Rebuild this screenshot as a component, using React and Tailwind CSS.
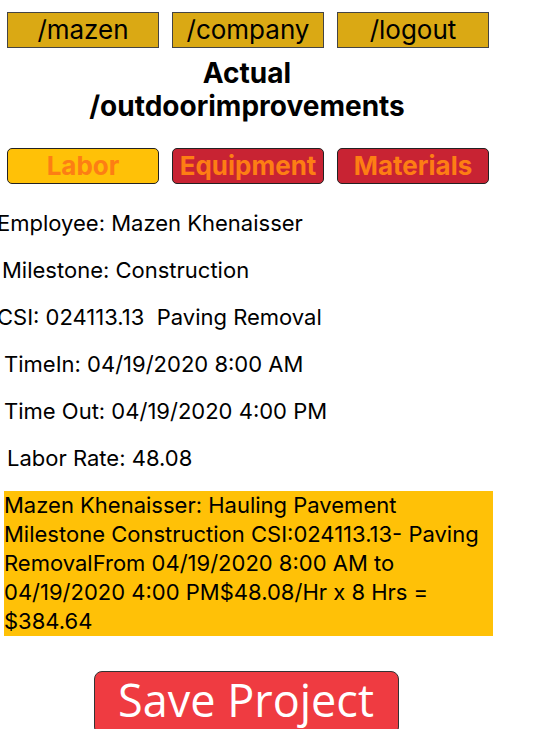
import React from 'react';

const body = { fontFamily: 'Inter, "Liberation Sans", sans-serif' };

export default function App() {
    const navLinks = ["/mazen", "/company", "/logout"];
    const tabs = [
        { name: "Labor", bg: "bg-[#ffc107]" },
        { name: "Equipment", bg: "bg-[#c82333]" },
        { name: "Materials", bg: "bg-[#c82333]" },
    ];

    return (
        <div className="w-[536px] h-[729px] overflow-hidden bg-white text-black" style={body}>
            {/* Top links */}
            <div className="flex gap-[13px] pl-[7px] pt-[12px]">
                {navLinks.map((link) => (
                    <div key={link} className="w-[152px] h-[36px] bg-[#daa914] border border-[#444] flex items-center justify-center text-[26px] leading-none">
                        {link}
                    </div>
                ))}
            </div>

            {/* Title */}
            <div className="w-[494px] text-center font-bold text-[28px] leading-[33px] mt-[9px]">
                <div>Actual</div>
                <div>/outdoorimprovements</div>
            </div>

            {/* Tabs */}
            <div className="flex gap-[13px] pl-[7px] mt-[25px]">
                {tabs.map((tab) => (
                    <div key={tab.name} className={`w-[152px] h-[36px] ${tab.bg} border border-[#222] rounded-[5px] flex items-center justify-center text-[26px] font-bold text-[#fd7e14] leading-none`}>
                        {tab.name}
                    </div>
                ))}
            </div>

            {/* Details */}
            <div className="mt-[16px] text-[22px] leading-[47px] whitespace-nowrap">
                <div className="ml-[-3px]">Employee: Mazen Khenaisser</div>
                <div className="ml-[2px]">Milestone: Construction</div>
                <div className="ml-[-3px]">CSI: 024113.13&nbsp;&nbsp;Paving Removal</div>
                <div className="ml-[4px]">TimeIn: 04/19/2020 8:00 AM</div>
                <div className="ml-[4px]">Time Out: 04/19/2020 4:00 PM</div>
                <div className="ml-[7px]">Labor Rate: 48.08</div>
            </div>

            {/* Summary */}
            <div className="ml-[4px] mt-[9px] w-[489px] bg-[#ffc107] text-[22px] leading-[29px] whitespace-nowrap">
                Mazen Khenaisser: Hauling Pavement<br />
                Milestone Construction CSI:024113.13- Paving<br />
                RemovalFrom 04/19/2020 8:00 AM to<br />
                04/19/2020 4:00 PM$48.08/Hr x 8 Hrs =<br />
                $384.64
            </div>

            {/* Save */}
            <div className="flex justify-center pr-[44px] mt-[35px]">
                <button className="w-[305px] h-[64px] pb-[8px] bg-[#ef3b41] border border-[#333] rounded-[8px] text-white text-[45px] leading-none" style={{ fontFamily: '"Open Sans", sans-serif' }}>
                    Save Project
                </button>
            </div>
        </div>
    );
}
